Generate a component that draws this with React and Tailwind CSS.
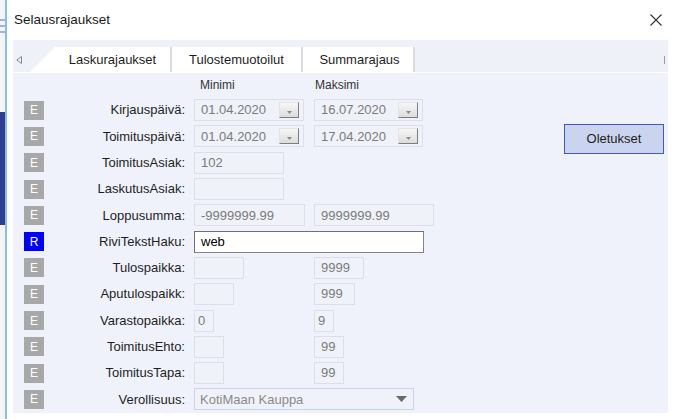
import React from 'react';

const rows = [
  { badge: 'E', label: 'Kirjauspäivä:', min: { kind: 'date', w: 110, v: '01.04.2020' }, max: { kind: 'date', w: 109, v: '16.07.2020' } },
  { badge: 'E', label: 'Toimituspäivä:', min: { kind: 'date', w: 110, v: '01.04.2020' }, max: { kind: 'date', w: 109, v: '17.04.2020' } },
  { badge: 'E', label: 'ToimitusAsiak:', min: { w: 90, v: '102' } },
  { badge: 'E', label: 'LaskutusAsiak:', min: { w: 90, v: '' } },
  { badge: 'E', label: 'Loppusumma:', min: { w: 111, v: '-9999999.99' }, max: { w: 120, v: '9999999.99' } },
  { badge: 'R', label: 'RiviTekstHaku:', wide: 'web' },
  { badge: 'E', label: 'Tulospaikka:', min: { w: 50, v: '' }, max: { w: 50, v: '9999' } },
  { badge: 'E', label: 'Aputulospaikk:', min: { w: 40, v: '' }, max: { w: 41, v: '999' } },
  { badge: 'E', label: 'Varastopaikka:', min: { w: 20, v: '0', tight: true }, max: { w: 20, v: '9', tight: true } },
  { badge: 'E', label: 'ToimitusEhto:', min: { w: 30, v: '' }, max: { w: 30, v: '99' } },
  { badge: 'E', label: 'ToimitusTapa:', min: { w: 30, v: '' }, max: { w: 30, v: '99' } },
  { badge: 'E', label: 'Verollisuus:', select: 'KotiMaan Kauppa' },
];

function DropButton() {
  return (
    <div className="w-[20px] h-[16px] mr-[4px] flex items-end justify-center pb-[3px] bg-gradient-to-b from-[#f7f7f7] to-[#dcdcdc] border border-t-[#e4e4e4] border-l-[#e4e4e4] border-r-[#7d7d7d] border-b-[#7d7d7d]">
      <svg width="5" height="3" viewBox="0 0 5 3">
        <path d="M0 0 H5 L2.5 3 Z" fill="#8a8a8a" />
      </svg>
    </div>
  );
}

function Field({ f }) {
  if (!f) return null;
  return (
    <div
      className={`h-[22px] flex items-center justify-between bg-[#eff2f9] border border-[#dadfea] text-[13px] text-[#7b7b7b] ${f.tight ? 'pl-[3px]' : 'pl-[6px]'}`}
      style={{ width: f.w }}
    >
      <span>{f.v}</span>
      {f.kind === 'date' && <DropButton />}
    </div>
  );
}

function Row({ row }) {
  return (
    <div className="h-[26.3px] flex items-center">
      <div
        className={`w-[20px] h-[19px] flex items-center justify-center text-[12px] text-white ${row.badge === 'R' ? 'bg-[#0000ff]' : 'bg-[#a8a8a8]'}`}
      >
        {row.badge}
      </div>
      <div className="w-[142px] text-right text-[13px] text-[#1e1e1e] pr-[1px]">{row.label}</div>
      <div className="ml-[8px] flex items-center">
        {row.wide !== undefined ? (
          <div className="w-[230px] h-[22px] flex items-center pl-[6px] bg-white border border-[#858585] border-t-[#6f6f6f] border-l-[#6f6f6f] text-[13px] text-black">
            {row.wide}
          </div>
        ) : row.select ? (
          <div className="w-[220px] h-[22px] flex items-center justify-between pl-[5px] pr-[6px] bg-[#eff2f9] border border-[#c9d3ee] text-[13px] text-[#8a8a8a]">
            <span>{row.select}</span>
            <svg width="11" height="6" viewBox="0 0 11 6">
              <path d="M0 0 H11 L5.5 6 Z" fill="#6a6a6a" />
            </svg>
          </div>
        ) : (
          <>
            <div className="w-[120px]">
              <Field f={row.min} />
            </div>
            <div className="w-[120px]">
              <Field f={row.max} />
            </div>
          </>
        )}
      </div>
    </div>
  );
}

export default function App() {
  return (
    <div
      className="w-[678px] h-[419px] bg-white flex overflow-hidden"
      style={{ fontFamily: '"Liberation Sans", Arial, sans-serif' }}
    >
      {/* Taustaikkunan reuna */}
      <div className="w-[7px] h-full flex flex-col border-r-2 border-[#8dbbea] bg-[#f3f5fa]">
        <div className="h-[19px]" />
        <div className="flex flex-col gap-[4px]">
          <div className="h-[2px] bg-[#9fb4d9]" />
          <div className="h-[2px] bg-[#9fb4d9]" />
          <div className="h-[2px] bg-[#9fb4d9]" />
        </div>
        <div className="h-[79px]" />
        <div className="h-[113px] bg-[#2e3f8e]" />
      </div>

      {/* Dialogi */}
      <div className="flex-1 flex flex-col pl-[6px]">
        <div className="h-[40px] flex items-center justify-between pl-[1px] pr-[16px]">
          <span className="text-[13.5px] text-[#1a1a1a]">Selausrajaukset</span>
          <svg width="12" height="12" viewBox="0 0 12 12">
            <path d="M0.5 0.5 L11.5 11.5 M11.5 0.5 L0.5 11.5" stroke="#333" strokeWidth="1.1" />
          </svg>
        </div>

        {/* Välilehdet */}
        <div className="w-[655px] h-[32px] bg-[#eef1f8] flex items-end relative">
          <div className="w-[17px] h-[25px] flex items-center pl-[3px]">
            <svg width="6" height="8" viewBox="0 0 6 8">
              <path d="M5.5 0.5 L0.8 4 L5.5 7.5 Z" fill="none" stroke="#8a8a8a" strokeWidth="1" />
            </svg>
          </div>
          <svg width="25" height="25" viewBox="0 0 25 25" className="block">
            <path d="M0 25 L25 0 V25 Z" fill="#ffffff" />
          </svg>
          <div className="w-[117px] h-[25px] bg-white flex items-center justify-center text-[13px] text-[#1e1e1e] border-r-2 border-[#d9dbe0]">
            Laskurajaukset
          </div>
          <div className="w-[131px] h-[25px] bg-white flex items-center justify-center text-[13px] text-[#1e1e1e] border-r-2 border-[#d9dbe0]">
            Tulostemuotoilut
          </div>
          <div className="w-[112px] h-[25px] bg-white flex items-center justify-center pl-[3px] text-[13px] text-[#1e1e1e] border-r-2 border-[#d9dbe0]">
            Summarajaus
          </div>
          <div className="flex-1" />
          <div className="w-[3px] h-[25px] flex items-center overflow-hidden mr-[1px]">
            <div className="w-[1px] h-[8px] bg-[#9a9a9a]" />
          </div>
        </div>

        {/* Rajauspaneeli */}
        <div className="w-[655px] h-[340px] mt-[1px] bg-[#eff2fa] flex">
          <div className="pl-[11px] flex flex-col">
            <div className="h-[24px] flex items-center text-[12px] text-[#333]">
              <div className="w-[170px]" />
              <div className="w-[120px] pl-[6px]">Minimi</div>
              <div className="w-[120px] pl-[1px]">Maksimi</div>
            </div>
            {rows.map((row) => (
              <Row key={row.label} row={row} />
            ))}
          </div>
          <div className="ml-auto mr-[4px] mt-[51px]">
            <div className="w-[100px] h-[30px] flex items-center justify-center bg-[#cbd4ee] border border-[#3f5cb8] text-[13px] text-[#1e1e1e]">
              Oletukset
            </div>
          </div>
        </div>
      </div>
    </div>
  );
}
